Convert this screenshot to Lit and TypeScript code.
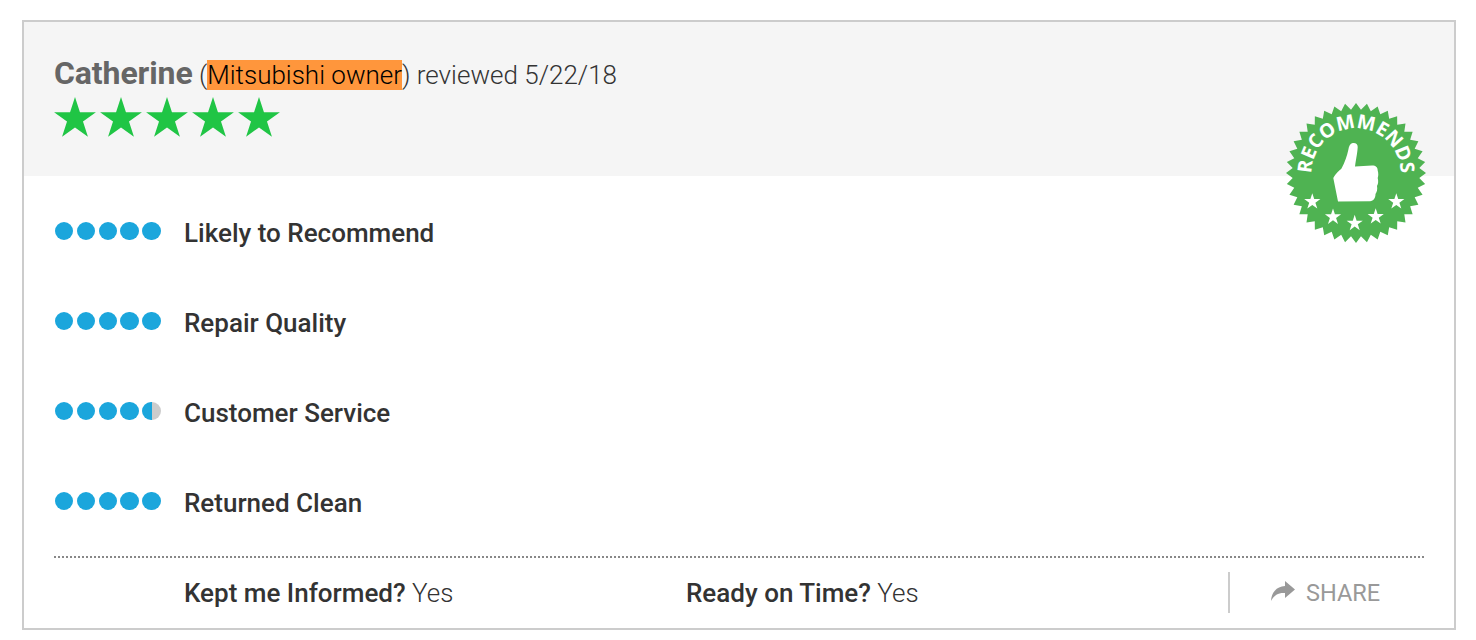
import { LitElement, html, css, svg } from "lit";
import { customElement } from "lit/decorators.js";

const starPts = (cx: number, cy: number, R: number) => {
  const r = R * 0.382;
  const pts: string[] = [];
  for (let i = 0; i < 10; i++) {
    const a = -Math.PI / 2 + (i * Math.PI) / 5;
    const q = i % 2 ? r : R;
    pts.push(`${(cx + q * Math.cos(a)).toFixed(2)},${(cy + q * Math.sin(a)).toFixed(2)}`);
  }
  return pts.join(" ");
};

const sealPts = () => {
  const n = 40;
  const pts: string[] = [];
  for (let i = 0; i < n * 2; i++) {
    const a = (i * Math.PI) / n - Math.PI / 2;
    const q = i % 2 ? 63.5 : 70;
    pts.push(`${(70 + q * Math.cos(a)).toFixed(2)},${(70 + q * Math.sin(a)).toFixed(2)}`);
  }
  return pts.join(" ");
};

const ratings: { label: string; value: number }[] = [
  { label: "Likely to Recommend", value: 5 },
  { label: "Repair Quality", value: 5 },
  { label: "Customer Service", value: 4.5 },
  { label: "Returned Clean", value: 5 },
];

@customElement("app-root")
export class AppRoot extends LitElement {
  static styles = css`
    :host {
      display: block;
      padding: 20px 20px 0 22px;
      font-family: Roboto, "Liberation Sans", sans-serif;
      color: #333;
    }
    .card {
      position: relative;
      box-sizing: border-box;
      height: 610px;
      border: 2px solid #ccc;
      background: #fff;
      display: flex;
      flex-direction: column;
    }
    .head {
      box-sizing: border-box;
      height: 154px;
      background: #f5f5f5;
      padding: 31px 30px 0;
    }
    .who {
      font-size: 26px;
      font-weight: 300;
      line-height: 40px;
      color: #333;
      white-space: nowrap;
    }
    .name {
      font-size: 32px;
      font-weight: 700;
      color: #666;
      letter-spacing: -0.1px;
    }
    mark {
      background: #ff963c;
      color: #000;
      font-weight: 300;
    }
    .stars {
      display: flex;
      gap: 4px;
      margin-top: 2px;
    }
    .stars svg {
      display: block;
      width: 42px;
      height: 42px;
    }
    .rows {
      display: flex;
      flex-direction: column;
      padding: 12px 30px 0;
    }
    .row {
      height: 90px;
      display: flex;
      align-items: center;
      gap: 22px;
      font-size: 26px;
      font-weight: 500;
      color: #333;
    }
    .dots {
      display: flex;
      gap: 3.4px;
      padding-left: 1px;
      margin-top: -4px;
      width: 107px;
    }
    .dot {
      width: 18.4px;
      height: 18.4px;
      border-radius: 50%;
      background: #1ba6dc;
    }
    .dot.half {
      background: linear-gradient(to right, #1ba6dc 50%, #ccc 50%);
    }
    .foot {
      margin: 8px 30px 0;
      border-top: 2px dotted #888;
      height: 70px;
      display: flex;
      align-items: center;
      font-size: 26px;
      font-weight: 300;
      color: #333;
    }
    .foot b {
      font-weight: 500;
    }
    .q1 {
      margin-left: 130px;
      width: 502px;
    }
    .share {
      margin-left: auto;
      margin-top: -1px;
      height: 41px;
      box-sizing: border-box;
      border-left: 2px solid #ccc;
      width: 196px;
      padding-left: 41px;
      display: flex;
      align-items: center;
      gap: 11px;
      color: #999;
      font-weight: 400;
      font-size: 23.5px;
    }
    .share svg {
      width: 24px;
      height: 20px;
      display: block;
      margin-top: -3px;
    }
    .badge {
      position: absolute;
      right: 28px;
      top: 81px;
      width: 140px;
      height: 140px;
      display: block;
    }
    .badge text {
      font-family: "Open Sans", sans-serif;
      font-weight: 700;
      font-size: 19.5px;
      fill: #fff;
    }
  `;

  private dots(v: number) {
    return html`<div class="dots">
      ${[0, 1, 2, 3, 4].map(
        (i) => html`<span class="dot ${v - i === 0.5 ? "half" : ""}"></span>`
      )}
    </div>`;
  }

  render() {
    const smallStars: [number, number, number][] = [
      [26.3, 98.7, 8.5],
      [47, 114, 8.5],
      [68.7, 120.3, 8.5],
      [89.7, 113.7, 8.5],
      [110.3, 98.7, 8.5],
    ];
    return html`
      <div class="card">
        <div class="head">
          <div class="who">
            <span class="name">Catherine</span> (<mark>Mitsubishi owner</mark>) reviewed 5/22/18
          </div>
          <div class="stars">
            ${[0, 1, 2, 3, 4].map(
              () => html`<svg viewBox="0 0 42 42">
                <polygon points="${starPts(21, 22, 22)}" fill="#20c545"></polygon>
              </svg>`
            )}
          </div>
        </div>
        <div class="rows">
          ${ratings.map(
            (r) => html`<div class="row">${this.dots(r.value)}<span>${r.label}</span></div>`
          )}
        </div>
        <div class="foot">
          <span class="q1"><b>Kept me Informed?</b> Yes</span>
          <span><b>Ready on Time?</b> Yes</span>
          <div class="share">
            <svg viewBox="0 0 24 20">
              <path
                d="M14 0 L24 8.5 L14 17 L14 12 C8 11.5 3.5 13.5 0 20 C0.5 12 5 5.5 14 5 Z"
                fill="#999"
              ></path>
            </svg>
            <span>SHARE</span>
          </div>
        </div>
        <svg class="badge" viewBox="0 0 140 140">
          <polygon points="${sealPts()}" fill="#4fb352"></polygon>
          <defs>
            <path id="arc" d="M 31.5 92.25 A 44.5 44.5 0 1 1 108.5 92.25"></path>
          </defs>
          <text text-anchor="middle">
            <textPath href="#arc" startOffset="50%">RECOMMENDS</textPath>
          </text>
          <path
            d="M66.7 40 C69.5 39.5 71.8 41 71.7 44 C71.5 49 70.5 53.5 69 63.5 L86 62.5 C90 62.5 91.8 64.5 91.7 67.5 C92.5 70 92.5 73 91.7 75 C92.5 78 92.3 81 91 83 C91.6 86 91 89 89.5 91 C89.5 95 87.5 98 84 98.3 L52 98.5 L47.3 75 C50 70 53 68 55.5 65.5 C59 59 61 53 62.3 47 C63 43 64 40.5 66.7 40 Z"
            fill="#fff"
          ></path>
          ${smallStars.map(
            ([x, y, r]) => svg`<polygon points="${starPts(x, y, r)}" fill="#fff"></polygon>`
          )}
        </svg>
      </div>
    `;
  }
}
